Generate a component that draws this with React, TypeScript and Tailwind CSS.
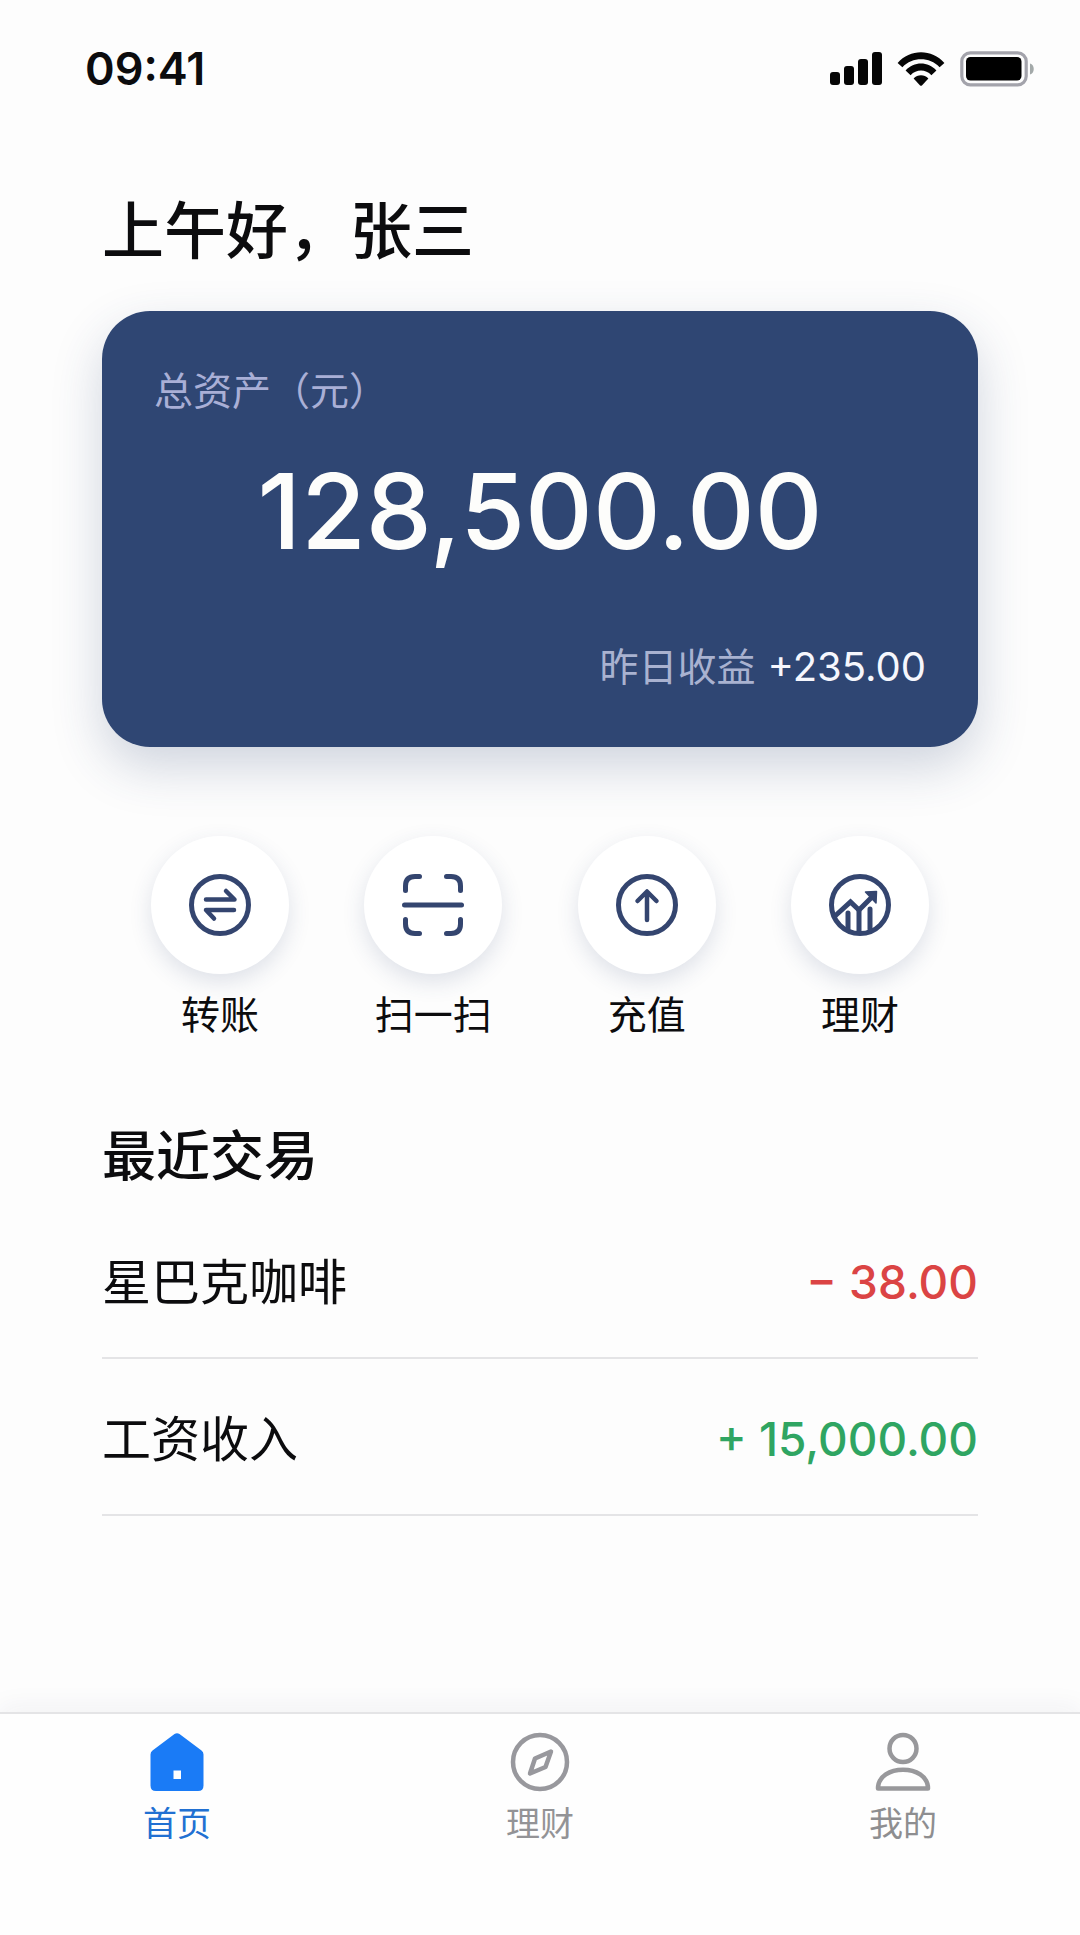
import type { ReactNode } from "react";

function SignalIcon() {
  return (
    <svg width="52" height="34" viewBox="0 0 52 34" fill="#060606" aria-hidden="true">
      <rect x="0" y="20" width="10" height="13" rx="3" />
      <rect x="14" y="14" width="10" height="19" rx="3" />
      <rect x="28" y="7" width="10" height="26" rx="3" />
      <rect x="42" y="0" width="10" height="33" rx="3" />
    </svg>
  );
}

function WifiIcon() {
  return (
    <svg width="48" height="34" viewBox="0 0 48 34" fill="#060606" aria-hidden="true">
      <path d="M0.6 11 C13 -3.2 35 -3.2 47.4 11 L42.6 15.2 C32.4 4.6 15.6 4.6 5.4 15.2 Z" />
      <path d="M8.6 18.4 C17 9.2 31 9.2 39.4 18.4 L34.4 23.2 C28.6 17 19.4 17 13.6 23.2 Z" />
      <path d="M16.6 26.4 C20.8 22.2 27.2 22.2 31.4 26.4 L24.9 33.4 Q24 34.2 23.1 33.4 Z" />
    </svg>
  );
}

function BatteryIcon() {
  return (
    <svg width="74" height="36" viewBox="0 0 74 36" aria-hidden="true">
      <rect x="1.8" y="1.8" width="64.4" height="32" rx="8.5" fill="none" stroke="#a3a3ab" strokeWidth="3.2" />
      <rect x="6" y="6" width="55.500" height="23.5" rx="4.5" fill="#000" />
      <path d="M70 12.500 C75 13.500 75 22.500 70 23.500 Z" fill="#a3a9a9" />
    </svg>
  );
}

function TransferIcon() {
  return (
    <svg width="62" height="62" viewBox="0 0 62 62" fill="none" stroke="#34456f" strokeWidth="4.500" strokeLinecap="round" strokeLinejoin="round" aria-hidden="true">
      <circle cx="31" cy="31" r="28.500" strokeWidth="5" />
      <path d="M17 25.500 H45.500 L37 17" />
      <path d="M45 36 H17 L25 44.500" />
    </svg>
  );
}

function ScanIcon() {
  return (
    <svg width="62" height="62" viewBox="0 0 62 62" fill="none" stroke="#34456f" strokeWidth="5" strokeLinecap="round" aria-hidden="true">
      <path d="M3.500 16.500 V12 Q3.500 2.500 13 2.500 H17.500" />
      <path d="M44.500 2.500 H49 Q58.500 2.500 58.500 12 V16.500" />
      <path d="M3.500 45.500 V50 Q3.500 59.500 13 59.500 H17.500" />
      <path d="M44.500 59.500 H49 Q58.500 59.500 58.500 50 V45.500" />
      <path d="M2.500 31 H59.500" />
    </svg>
  );
}

function TopUpIcon() {
  return (
    <svg width="62" height="62" viewBox="0 0 62 62" fill="none" stroke="#34456f" strokeWidth="4.500" strokeLinecap="round" strokeLinejoin="round" aria-hidden="true">
      <circle cx="31" cy="31" r="28.500" strokeWidth="5" />
      <path d="M31 46 V18 M21.500 27 L31 17.500 L40.500 27" />
    </svg>
  );
}

function WealthIcon() {
  return (
    <svg width="62" height="62" viewBox="0 0 62 62" fill="none" stroke="#34456f" strokeWidth="4.500" strokeLinecap="round" strokeLinejoin="round" aria-hidden="true">
      <circle cx="31" cy="31" r="28.500" strokeWidth="5" />
      <path d="M6 42 L21.500 28 L30 36 L44 22" strokeLinejoin="miter" strokeWidth="5" />
      <path d="M36.500 18 L47.500 17.500 L47 29 Z" fill="#34456f" strokeWidth="1.500" />
      <path d="M19 39 V55 M30 37 V58 M41 35 V55" strokeWidth="5" />
    </svg>
  );
}

function HomeIcon() {
  return (
    <svg width="60" height="60" viewBox="0 0 60 60" aria-hidden="true">
      <path
        fill="#1a7bf6"
        fillRule="evenodd"
        d="M27.500 2 Q30 0.300 32.500 2 L54.500 18.500 Q56.500 20 56.500 22.500 V53.500 Q56.500 59 51 59 H9 Q3.500 59 3.500 53.500 V22.500 Q3.500 20 5.500 18.500 Z M26.500 38.500 V47 H34 V38.500 Z"
      />
    </svg>
  );
}

function CompassIcon() {
  return (
    <svg width="60" height="60" viewBox="0 0 60 60" fill="none" stroke="#98989d" strokeWidth="4.500" strokeLinejoin="round" aria-hidden="true">
      <circle cx="30" cy="30" r="27" />
      <path d="M41 19.500 L25 26.500 L20 41.500 L35.500 35 Z" strokeWidth="4.500" />
    </svg>
  );
}

function PersonIcon() {
  return (
    <svg width="60" height="60" viewBox="0 0 60 60" fill="none" stroke="#98989b" strokeWidth="4.500" strokeLinejoin="round" aria-hidden="true">
      <circle cx="30" cy="16.500" r="13.500" />
      <path d="M5 56.500 C5 31.500 55 31.500 55 56.500 Z" />
    </svg>
  );
}

const actions: { label: string; icon: ReactNode }[] = [
  { label: "转账", icon: <TransferIcon /> },
  { label: "扫一扫", icon: <ScanIcon /> },
  { label: "充值", icon: <TopUpIcon /> },
  { label: "理财", icon: <WealthIcon /> },
];

const transactions = [
  { name: "星巴克咖啡", amount: "− 38.00", color: "text-[#db4444]" },
  { name: "工资收入", amount: "+ 15,000.00", color: "text-[#2fa562]" },
];

const tabs: { label: string; icon: ReactNode; color: string; current: boolean }[] = [
  { label: "首页", icon: <HomeIcon />, color: "text-[#2170d2]", current: true },
  { label: "理财", icon: <CompassIcon />, color: "text-[#939396]", current: false },
  { label: "我的", icon: <PersonIcon />, color: "text-[#8e8e90]", current: false },
];

export default function App() {
  return (
    <div className="flex min-h-screen flex-col bg-[#fdfdfd] font-['Inter','Noto_Sans_CJK_SC',sans-serif] text-[#0c0c0e]">
      <header className="flex items-center justify-between pt-[39px] pr-[46px] pl-[85px]">
        <time className="text-[45px] leading-[60px] font-semibold">09:41</time>
        <div className="flex items-center gap-[15px]">
          <SignalIcon />
          <WifiIcon />
          <BatteryIcon />
        </div>
      </header>

      <main className="flex flex-col px-[102px] pt-[93px]">
        <h1 className="text-[62px] leading-[80px] font-medium">上午好，张三</h1>

        <section className="mt-[39px] flex flex-col rounded-[48px] bg-[#2f4673] px-[52px] pt-[50px] pb-[50px] shadow-[0_20px_50px_rgba(47,70,115,0.22)]">
          <h2 className="text-[39px] leading-[60px] text-[#a9afd6]">总资产（元）</h2>
          <p className="mt-[26px] text-center text-[105px] leading-[128px] font-medium text-[#fdfdfb]">128,500.00</p>
          <p className="mt-[62px] flex items-center justify-end gap-3 text-[39px] leading-[60px]">
            <span className="text-[#a9b2d0]">昨日收益</span>
            <span className="text-[40px] text-[#f6f7fd]">+235.00</span>
          </p>
        </section>

        <div className="mt-[89px] flex justify-between px-[49px]">
          {actions.map((action) => (
            <button key={action.label} type="button" className="flex w-[138px] flex-col items-center">
              <span className="flex size-[138px] items-center justify-center rounded-full bg-white shadow-[0_8px_22px_rgba(47,70,115,0.15)]">
                {action.icon}
              </span>
              <span className="mt-[13px] text-[39px] leading-[56px] whitespace-nowrap">{action.label}</span>
            </button>
          ))}
        </div>

        <section className="mt-[82px]">
          <h2 className="text-[54px] leading-[64px] font-medium">最近交易</h2>
          <ul className="mt-[13px]">
            {transactions.map((item) => (
              <li key={item.name} className="flex h-[157px] items-center justify-between border-b-2 border-[#e4e4e6] pt-[6px]">
                <span className="text-[49px]">{item.name}</span>
                <span className={`text-[46px] font-medium ${item.color}`}>{item.amount}</span>
              </li>
            ))}
          </ul>
        </section>
      </main>

      <nav className="mt-auto flex justify-between border-t-2 border-[#e4e4e6] bg-[#fefefe] px-[143px] pt-[18px] pb-[85px] shadow-[0_-6px_24px_rgba(40,40,80,0.05)]">
        {tabs.map((tab) => (
          <a
            key={tab.label}
            href="#"
            aria-current={tab.current ? "page" : undefined}
            className={`flex flex-col items-center gap-[6px] text-[34px] leading-[52px] ${tab.color}`}
          >
            {tab.icon}
            {tab.label}
          </a>
        ))}
      </nav>
    </div>
  );
}
